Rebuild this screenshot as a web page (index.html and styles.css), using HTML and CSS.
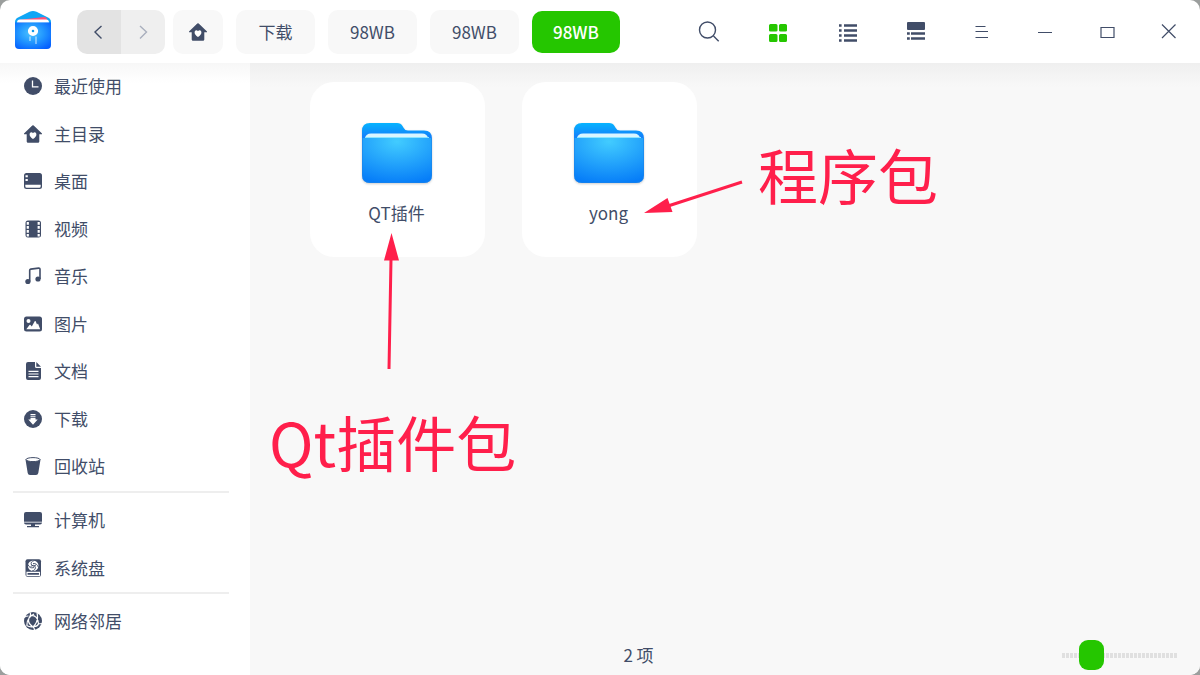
FILE: index.html
```html
<!DOCTYPE html>
<html lang="zh-CN">
<head>
<meta charset="utf-8">
<title>文件管理器</title>
<link rel="stylesheet" href="styles.css">
</head>
<body>
<svg class="defs" aria-hidden="true">
  <defs>
    <linearGradient id="folder-back" x1="0" y1="0" x2="0" y2="1">
      <stop offset="0" stop-color="#06b4ff"/><stop offset=".25" stop-color="#1283fb"/><stop offset="1" stop-color="#087cf5"/>
    </linearGradient>
    <radialGradient id="folder-front" cx=".5" cy=".08" r=".95">
      <stop offset="0" stop-color="#42ccff"/><stop offset="1" stop-color="#067df8"/>
    </radialGradient>
    <radialGradient id="logo-front" cx=".45" cy=".4" r=".7">
      <stop offset="0" stop-color="#4cc4ff"/><stop offset=".5" stop-color="#2297ff"/><stop offset="1" stop-color="#0560ff"/>
    </radialGradient>
    <symbol id="home" viewBox="0 0 18 18">
      <path fill="currentColor" d="M8.3.5q.7-.6 1.4 0L18 8.400v.9h-2.700v7.100q0 1.300-1.300 1.300H4q-1.300 0-1.300-1.300V9.300H0v-.9z"/>
      <path fill="#fff" d="M9 13.900C6.800 12.400 5.600 11.200 5.600 9.400 5.600 7.200 8 6.700 9 8.300c1-1.600 3.400-1.100 3.400 1.100 0 1.800-1.200 3-3.400 4.500z"/>
    </symbol>
    <symbol id="folder" viewBox="0 0 74 64">
      <path fill="url(#folder-back)" d="M2 10q0-8 8-8h27q4 0 5.500 3l1.200 2q1.200 2.500 4.300 2.500h16q8 0 8 8V54H2z"/>
      <path fill="#d9f5ff" d="M5 17q1-4.500 6-4.500h51q5 0 6 4.500z"/>
      <path fill="url(#folder-front)" d="M2 17h70v37q0 8-8 8H10q-8 0-8-8z"/>
      <path stroke="#8ce5ff" d="M5 16.500h64"/>
      <path fill="none" stroke="#1e83e8" stroke-opacity=".55" d="M2.500 17v37q0 7.500 7.500 7.500h54q7.500 0 7.500-7.500V17"/>
    </symbol>
  </defs>
</svg>
<div class="window">
  <header class="titlebar">
    <svg class="logo" viewBox="0 0 36 38" aria-hidden="true">
      <path fill="#10a6f5" d="M0 11q0-3 3-4.500L14.500.8q3.500-1.500 7 0L33 6.500q3 1.500 3 4.500v22H0z"/>
      <path fill="#ff5278" d="M3 9 29 6q3 0 3.500 4L4 12z"/>
      <path fill="#fff" d="M2 11.800Q2 8.500 5 8.500h26q3 0 3 3.300z"/>
      <path fill="url(#logo-front)" d="M0 11.500h36V34q0 4-4 4H4q-4 0-4-4z"/>
      <circle cx="18" cy="20" r="3.200" fill="#129be8" stroke="#fff" stroke-width="3.800"/>
      <path stroke="#fff" stroke-opacity=".8" d="M15 25.500V30m6-4.500V33" fill="none"/>
    </svg>
    <div class="history">
      <button class="back" aria-label="后退"><svg viewBox="0 0 18 18"><path d="m11.500 3-6.500 6 6.500 6.500"/></svg></button>
      <button class="forward" aria-label="前进"><svg viewBox="0 0 18 18"><path d="m6 3 6.500 6L6 15.500"/></svg></button>
    </div>
    <nav class="crumbs" aria-label="路径">
      <button class="crumb crumb-home" aria-label="主目录"><svg class="icon"><use href="#home"/></svg></button>
      <button class="crumb">下载</button>
      <button class="crumb">98WB</button>
      <button class="crumb">98WB</button>
      <button class="crumb active">98WB</button>
    </nav>
    <div class="views">
      <button aria-label="搜索"><svg viewBox="0 0 24 24"><g fill="none" stroke="currentColor" stroke-width="1.400"><circle cx="10.500" cy="10" r="8"/><path d="m16.500 16 5.200 5.200"/></g></svg></button>
      <button class="selected" aria-label="图标视图"><svg viewBox="0 0 24 24"><path fill="currentColor" d="M4.500 4H10q1.500 0 1.500 1.500v5q0 1-1.500 1H4.500Q3 11.500 3 10.500v-5Q3 4 4.500 4zM14.500 4h5Q21 4 21 5.500v5q0 1-1.500 1h-5q-1.500 0-1.500-1v-5Q13 4 14.500 4zM4.500 14H10q1.500 0 1.500 1.500v5q0 1.500-1.500 1.500H4.500Q3 22 3 20.500v-5Q3 14 4.500 14zM14.500 14h5q1.500 0 1.500 1.500v5q0 1.500-1.500 1.500h-5q-1.500 0-1.500-1.500v-5q0-1.500 1.500-1.500z"/></svg></button>
      <button aria-label="列表视图"><svg viewBox="0 0 24 24"><path stroke="currentColor" stroke-width="2.600" d="M4 5.500h2.600m2.400 0h13M4 10.500h2.600m2.400 0h13M4 15.500h2.600m2.400 0h13M4 20.500h2.600m2.400 0h13"/></svg></button>
      <button aria-label="详细信息"><svg viewBox="0 0 24 24"><rect x="3" y="2" width="18" height="8" rx="1" fill="currentColor"/><path stroke="currentColor" stroke-width="2.600" d="M3 13.500h2.800m1.200 0h14M3 18.500h2.800m1.200 0h14"/></svg></button>
    </div>
    <div class="controls">
      <button aria-label="菜单"><svg viewBox="0 0 24 24"><path d="M4.500 6.500h10M4.500 11.500h12.500M4.500 17.500h12.500"/></svg></button>
      <button aria-label="最小化"><svg viewBox="0 0 24 24"><path d="M5 12.500h14"/></svg></button>
      <button aria-label="最大化"><svg viewBox="0 0 24 24"><path d="M6 7.500h13v10H6z"/></svg></button>
      <button aria-label="关闭"><svg viewBox="0 0 24 24"><path d="m5 4.500 13.500 13.500m0-13.500L5 18"/></svg></button>
    </div>
  </header>
  <div class="body">
    <aside class="sidebar">
      <nav class="group group-places">
        <a href="#"><svg class="icon" viewBox="0 0 18 18"><circle cx="9" cy="9" r="9" fill="currentColor"/><path d="M8.500 3.500v6.300h6" fill="none" stroke="#fff" stroke-width="1.300"/></svg>最近使用</a>
        <a href="#"><svg class="icon"><use href="#home"/></svg>主目录</a>
        <a href="#"><svg class="icon" viewBox="0 0 18 18"><rect y="1" width="18" height="16" rx="2.500" fill="currentColor"/><path fill="#fff" d="M1.300 12.800h15.400v1.500q0 1.500-1.500 1.500H2.800q-1.500 0-1.500-1.500zM1.500 3.200h2.300v2H1.500zM1.500 7h2.300v2H1.500z"/></svg>桌面</a>
        <a href="#"><svg class="icon" viewBox="0 0 18 18"><rect x="1.500" y=".5" width="15.500" height="17" rx="2.500" fill="currentColor"/><path stroke="#fff" stroke-width="2.200" stroke-dasharray="2.800 1.200" d="M3.800 2v14.500M14.700 2v14.500"/></svg>视频</a>
        <a href="#"><svg class="icon" viewBox="0 0 18 18"><path fill="none" stroke="currentColor" stroke-width="1.600" d="M5.700 14.500V3.300q0-1 1-1.200l8-1q1.300-.1 1.300 1.100V12"/><circle cx="3.900" cy="14.500" r="2.600" fill="currentColor"/><circle cx="14" cy="12" r="2.600" fill="currentColor"/></svg>音乐</a>
        <a href="#"><svg class="icon" viewBox="0 0 18 18"><rect y="1.500" width="18" height="15" rx="2.500" fill="currentColor"/><circle cx="4.500" cy="6" r="2" fill="#fff"/><path fill="#fff" d="M2.300 14.200 5.500 10q.5-.7 1 0l1.300 1.500 2.900-5.200q.5-.8 1 0l1.300 3.200 1-1.100 2.200 5.800z"/></svg>图片</a>
        <a href="#"><svg class="icon" viewBox="0 0 18 18"><path fill="currentColor" d="M4 0h7v4.500q0 1.500 1.500 1.500H17v10q0 2-2 2H4q-2 0-2-2V2q0-2 2-2zM12.300 0 17 4.800h-4.700z"/><path stroke="#fff" stroke-width="1.200" d="M4.500 9.300h10M4.500 12h10M4.500 14.700h10"/></svg>文档</a>
        <a href="#"><svg class="icon" viewBox="0 0 18 18"><circle cx="9" cy="9" r="9" fill="currentColor"/><path fill="#fff" d="M6.500 4h5v1.300h-5zM6.500 6.200h5v1h-5zM6.500 8h5v1.500h2.200L9 14.800 4.300 9.500h2.200z"/></svg>下载</a>
        <a href="#"><svg class="icon" viewBox="0 0 18 18"><path fill="currentColor" d="M1.500 2.500h15L14.300 16q-.4 2-2.300 2H6q-2 0-2.300-2z"/><ellipse cx="9" cy="2.600" rx="7" ry="2" fill="#fff" stroke="currentColor"/></svg>回收站</a>
      </nav>
      <hr>
      <nav class="group group-disks">
        <a href="#"><svg class="icon" viewBox="0 0 18 18"><rect y="1" width="18" height="12.500" rx="2" fill="currentColor"/><path stroke="#fff" stroke-width=".8" d="M0 11.200h18"/><path fill="currentColor" d="M7 13h4v2H7zM3 15h12v1.200H3z"/></svg>计算机</a>
        <a href="#"><svg class="icon" viewBox="0 0 18 18"><rect x="1.500" y=".3" width="15.500" height="17.500" rx="2" fill="currentColor"/><circle cx="9.200" cy="6.800" r="5.300" fill="#fff"/><path fill="none" stroke="currentColor" stroke-width=".9" d="M10.500 1.500Q6 2.500 7.500 6q1.500 2.500 4.500 0M8 12q4.500-1 3-4.800Q9.500 5 6.500 7.500M4 5.500q1.500 4.500 6 3M14.500 8.500Q13 4 9 4.500"/><path fill="none" stroke="#fff" stroke-width="1.100" d="M3 13.400h12.500v3H3z"/></svg>系统盘</a>
      </nav>
      <hr>
      <nav class="group group-network">
        <a href="#"><svg class="icon" viewBox="0 0 18 18"><circle cx="9" cy="9" r="9" fill="currentColor"/><path fill="none" stroke="#fff" stroke-width="1.200" d="M0 5.500Q2 4 4.500 4M6 .5q1 2 0 3.500-4 6 2.500 10.500 2 1 2 3.500M6.500 3.500Q14 3 14.500 12M10 2Q2.500 6 3 13.500M13 1q2 8-3.500 13.500-3 1-7-1M14.500 11.500q1.500.5 3.500 0M10 14.500q3.500 0 4.500-2.500"/></svg>网络邻居</a>
      </nav>
    </aside>
    <main class="content">
      <div class="files">
        <button class="file"><svg class="folder"><use href="#folder"/></svg><span>QT插件</span></button>
        <button class="file"><svg class="folder"><use href="#folder"/></svg><span>yong</span></button>
      </div>
      <footer class="status">
        <span class="count">2 项</span>
        <input class="zoom" type="range" min="0" max="100" value="19" aria-label="图标大小">
      </footer>
      <svg class="arrows" width="500" height="320" viewBox="0 0 500 320" aria-hidden="true">
        <g fill="#ff1f4b" stroke="#ff1f4b">
          <path stroke-width="3" d="m139 306 2-110M492 119l-74 24"/>
          <path stroke="none" d="m141.500 170 7.500 27.500h-15zM394 150l23.500-15 5 14z"/>
        </g>
      </svg>
      <span class="note note-program">程序包</span>
      <span class="note note-plugin">Qt插件包</span>
    </main>
  </div>
</div>
</body>
</html>
```
FILE: styles.css
```css
* {
  box-sizing: border-box;
}

body {
  margin: 0;
  background: #9b9e9d;
  color: #414d68;
  font-family: "Noto Sans CJK SC", sans-serif;
  font-size: 17px;
  line-height: 24px;
}

button {
  border: 0;
  padding: 0;
  background: none;
  color: inherit;
  font: inherit;
}

.defs {
  position: absolute;
  width: 0;
  height: 0;
}

.window {
  display: flex;
  flex-direction: column;
  min-height: 100vh;
  border-radius: 10px;
  overflow: hidden;
  background: #fff;
}

.titlebar {
  display: flex;
  align-items: center;
  height: 63px;
  padding-left: 15px;
}

.logo {
  width: 36px;
  height: 38px;
  margin-right: 26px;
  margin-bottom: 3px;
}

.history {
  display: flex;
  margin-right: 8px;
  border-radius: 10px;
  overflow: hidden;
}

.history button {
  display: grid;
  place-items: center;
  width: 44px;
  height: 44px;
  background: #efefef;
}

.history .back {
  background: #e3e3e3;
}

.history svg {
  width: 18px;
  height: 18px;
  fill: none;
  stroke: #414d68;
  stroke-width: 1.4;
}

.history .forward svg {
  stroke: #a9afbd;
}

.crumbs {
  display: flex;
  align-items: center;
  gap: 13px;
}

.crumb {
  min-width: 79px;
  height: 44px;
  padding: 0 22px;
  border-radius: 10px;
  background: #f8f8f8;
}

.crumb-home {
  display: grid;
  place-items: center;
  min-width: 0;
  padding: 0 16px;
}

.crumb.active {
  height: 42px;
  padding: 0 21px;
  background: #25c600;
  color: #fff;
  font-weight: 500;
}

.icon {
  flex: none;
  width: 18px;
  height: 18px;
}

.views,
.controls {
  display: flex;
}

.views {
  margin-left: auto;
  margin-right: 2px;
}

.views button,
.controls button {
  display: grid;
  place-items: center;
  width: 69px;
  height: 44px;
}

.controls button {
  width: 62px;
}

.views svg,
.controls svg {
  width: 24px;
  height: 24px;
}

.controls svg {
  fill: none;
  stroke: #414d68;
  stroke-width: 1.2;
}

.views .selected {
  color: #25c600;
}

.body {
  display: flex;
  flex: 1;
}

.sidebar {
  display: flex;
  flex-direction: column;
  flex: none;
  width: 250px;
  padding-bottom: 30px;
  background: linear-gradient(#f7f7f7, #fff 20px);
}

.group {
  display: flex;
  flex-direction: column;
  flex: 1 0 0;
}

.group-places {
  flex-grow: 9;
}

.group-disks {
  flex-grow: 2;
}

.group a {
  display: flex;
  flex: 1;
  align-items: center;
  gap: 12px;
  padding-left: 24px;
  color: inherit;
  text-decoration: none;
}

.group-places a {
  padding-bottom: 1px;
}

.sidebar hr {
  flex: none;
  height: 2px;
  margin: 0 21px 4px 13px;
  border: 0;
  background: #eee;
}

.content {
  position: relative;
  display: flex;
  flex-direction: column;
  flex: 1;
  background: linear-gradient(#efefef, #f8f8f8 24px);
}

.files {
  display: flex;
  flex: 1;
  flex-wrap: wrap;
  align-content: flex-start;
  gap: 37px;
  padding: 19px 60px;
}

.file {
  display: flex;
  flex-direction: column;
  align-items: center;
  gap: 16px;
  width: 175px;
  height: 175px;
  padding: 39px 2px 0 0;
  border-radius: 24px;
  background: #fff;
}

.folder {
  width: 74px;
  height: 64px;
  filter: drop-shadow(0 1px 1px #0003);
}

.status {
  display: grid;
  grid-template-columns: 1fr auto 1fr;
  align-items: center;
  height: 40px;
  padding: 0 23px 0 0;
}

.count {
  grid-column: 2;
  margin-right: 150px;
}

.zoom {
  appearance: none;
  justify-self: end;
  width: 115px;
  height: 30px;
  margin: 0;
  background: none;
}

.zoom::-webkit-slider-runnable-track {
  height: 5px;
  background: repeating-linear-gradient(90deg, #e0e0e0 0 3px, #f8f8f8 3px 4px);
}

.zoom::-webkit-slider-thumb {
  appearance: none;
  width: 25px;
  height: 30px;
  margin-top: -13px;
  border-radius: 9px;
  background: #25c600;
}

.arrows {
  position: absolute;
  left: 0;
  top: 0;
  pointer-events: none;
}

.note {
  position: absolute;
  color: #ff1f4b;
  font-size: 60px;
  line-height: 60px;
  white-space: nowrap;
  pointer-events: none;
}

.note-program {
  left: 508px;
  top: 81px;
}

.note-plugin {
  left: 19px;
  top: 348px;
}
```
